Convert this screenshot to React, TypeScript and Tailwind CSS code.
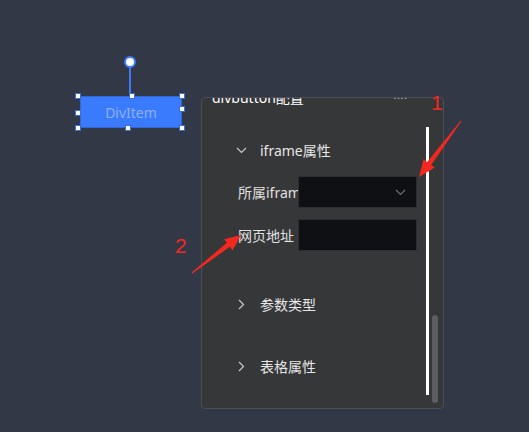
import React from "react";

const ChevronDown = ({ className = "" }: { className?: string }) => (
  <svg width="11" height="7" viewBox="0 0 11 7" className={className} fill="none">
    <path d="M1 1l4.5 4.5L10 1" stroke="currentColor" strokeWidth="1.2" />
  </svg>
);
const ChevronRight = () => (
  <svg width="7" height="11" viewBox="0 0 7 11" fill="none">
    <path d="M1 1l4.5 4.5L1 10" stroke="currentColor" strokeWidth="1.2" />
  </svg>
);

const Handle = ({ x, y }: { x: number; y: number }) => (
  <div
    className="absolute w-[6px] h-[6px] bg-white border border-[#3b6fd8]"
    style={{ left: x - 3, top: y - 3 }}
  />
);

const Section = ({ title, open = false }: { title: string; open?: boolean }) => (
  <div className="flex items-center h-[22px] text-[14px] text-[#e6e6e6]">
    <span className="w-[24px] flex justify-start text-[#c8c8c8]">
      {open ? <ChevronDown /> : <span className="pl-[2px]"><ChevronRight /></span>}
    </span>
    <span>{title}</span>
  </div>
);

export default function App() {
  const font = { fontFamily: '"Noto Sans", "Noto Sans CJK SC", sans-serif' };
  return (
    <div className="relative w-[529px] h-[432px] overflow-hidden bg-[#333847]" style={font}>
      {/* rotate handle */}
      <div className="absolute left-[129px] top-[64px] w-[2px] h-[32px] bg-[#3e7bf8]" />
      <div className="absolute left-[124px] top-[56px] w-[12px] h-[12px] rounded-full bg-white border-[2px] border-[#3e7bf8]" />
      {/* node */}
      <div className="absolute left-[80px] top-[96px] w-[102px] h-[32px] bg-[#3a7bfd] border border-[#3066d6] flex items-center justify-center text-[14px] text-[#8db2fb]">
        DivItem
      </div>
      <Handle x={78} y={96} />
      <Handle x={132} y={96} />
      <Handle x={182} y={96} />
      <Handle x={78} y={113} />
      <Handle x={182} y={109} />
      <Handle x={78} y={128} />
      <Handle x={128} y={128} />
      <Handle x={182} y={128} />

      {/* panel */}
      <div className="absolute left-[201px] top-[97px] w-[243px] h-[312px] rounded-[4px] border border-[#4c4e55] bg-[#363739] overflow-hidden">
        <div className="flex items-center justify-between pl-[10px] pr-[36px] mt-[-11px] h-[20px] text-[14px] text-white">
          <span>divbutton配置</span>
          <span className="text-[12px] text-[#c8c8c8]">××</span>
        </div>
        <div className="flex flex-col pl-[34px] pr-[25px] mt-[32px]">
          <Section title="iframe属性" open />
          <div className="flex flex-col gap-[11px] mt-[15px] pl-[2px]">
            <div className="flex items-center h-[32px]">
              <span className="w-[60px] shrink-0 text-[14px] text-[#e0e0e0] whitespace-nowrap overflow-hidden">所属iframe</span>
              <div className="w-[119px] h-[32px] bg-[#0f1014] border border-[#2c2e33] flex items-center justify-end pr-[10px]">
                <ChevronDown className="text-[#6b6d73]" />
              </div>
            </div>
            <div className="flex items-center h-[32px]">
              <span className="w-[60px] shrink-0 text-[14px] text-[#e0e0e0] whitespace-nowrap">网页地址</span>
              <div className="w-[119px] h-[32px] bg-[#0f1014] border border-[#2c2e33]" />
            </div>
          </div>
          <div className="flex flex-col gap-[40px] mt-[42px]">
            <Section title="参数类型" />
            <Section title="表格属性" />
          </div>
        </div>
        {/* white line */}
        <div className="absolute left-[224px] top-[29px] w-[3px] h-[268px] bg-white" />
        {/* scrollbar thumb */}
        <div className="absolute left-[230px] top-[217px] w-[6px] h-[88px] rounded-full bg-[#5c5d63]" />
      </div>

      {/* annotations */}
      <svg className="absolute left-0 top-0" width="529" height="432" viewBox="0 0 529 432">
        <polygon
          points="461.4,121.3 431.2,164.9 434.8,167.6 419,177 423.6,159.2 427.2,161.9 460.6,120.7"
          fill="#f5281f"
        />
        <polygon
          points="192.3,273.4 229.9,246.8 232.7,250.3 241,235 224.1,239.3 226.9,242.8 191.7,272.6"
          fill="#f5281f"
        />
      </svg>
      <div className="absolute left-[431px] top-[92px] text-[21px] leading-none text-[#f5281f]" style={{ fontFamily: '"Liberation Sans", sans-serif' }}>1</div>
      <div className="absolute left-[175px] top-[235px] text-[21px] leading-none text-[#f5281f]" style={{ fontFamily: '"Liberation Sans", sans-serif' }}>2</div>
    </div>
  );
}
